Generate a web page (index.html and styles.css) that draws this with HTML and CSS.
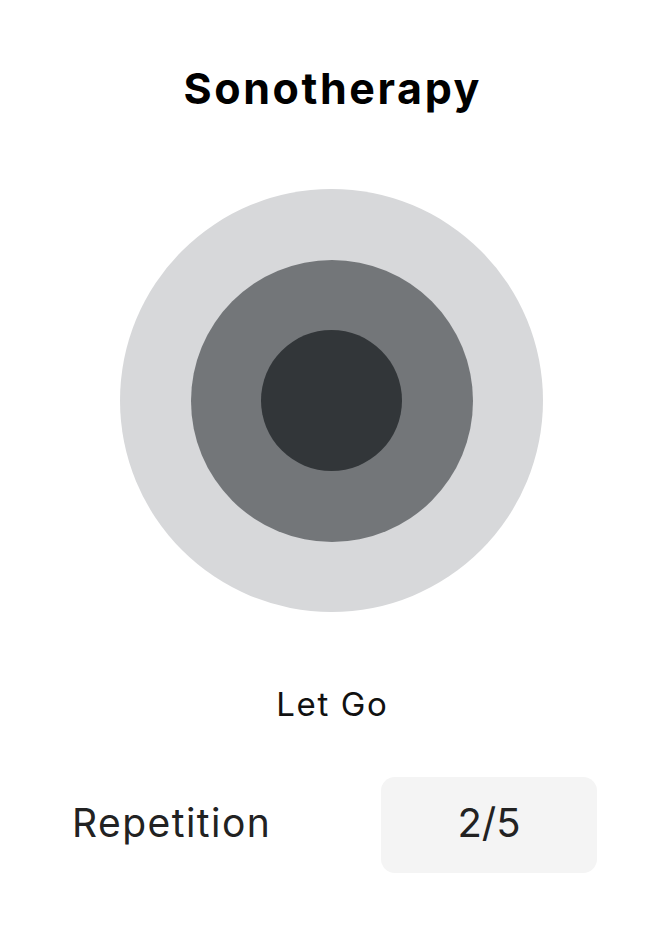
FILE: index.html
```html
<!DOCTYPE html>
<html lang="en">
<head>
<meta charset="utf-8">
<title>Sonotherapy</title>
<link rel="stylesheet" href="styles.css">
</head>
<body>
<main class="screen">
  <h1 class="title">Sonotherapy</h1>
  <div class="ring ring-outer">
    <div class="ring ring-middle">
      <div class="ring ring-inner"></div>
    </div>
  </div>
  <p class="phase">Let Go</p>
  <div class="stat-row">
    <span class="stat-label">Repetition</span>
    <div class="stat-box">2/5</div>
  </div>
</main>
</body>
</html>
```
FILE: styles.css
```css
html, body {
  margin: 0;
  padding: 0;
  background: #ffffff;
}
body {
  font-family: Inter, "Noto Sans", "Liberation Sans", sans-serif;
  color: #000;
}
.screen {
  display: flex;
  flex-direction: column;
  align-items: center;
  padding-top: 63px;
}
.title {
  margin: 0;
  padding-left: 2.6px;
  font-size: 43px;
  line-height: 50px;
  font-weight: 700;
  letter-spacing: 2.6px;
  color: #000;
}
.ring {
  display: flex;
  align-items: center;
  justify-content: center;
  border-radius: 50%;
  flex: none;
}
.ring-outer {
  width: 423px;
  height: 423px;
  margin-top: 76px;
  background: #d7d8da;
}
.ring-middle {
  width: 282px;
  height: 282px;
  background: #737679;
}
.ring-inner {
  width: 141px;
  height: 141px;
  background: #323639;
}
.phase {
  margin: 72px 0 0;
  padding-left: 1.6px;
  font-size: 33px;
  line-height: 40px;
  letter-spacing: 1.6px;
  color: #111;
}
.stat-row {
  align-self: stretch;
  display: flex;
  align-items: center;
  justify-content: space-between;
  margin-top: 53px;
  padding: 0 66px 0 72px;
}
.stat-label {
  font-size: 39px;
  line-height: 48px;
  letter-spacing: 1.45px;
  color: #222;
  padding-bottom: 5px;
}
.stat-box {
  width: 216px;
  height: 96px;
  box-sizing: border-box;
  display: flex;
  align-items: center;
  justify-content: center;
  padding-bottom: 6px;
  border-radius: 14px;
  background: #f4f4f4;
  font-size: 40px;
  color: #222;
}
```
